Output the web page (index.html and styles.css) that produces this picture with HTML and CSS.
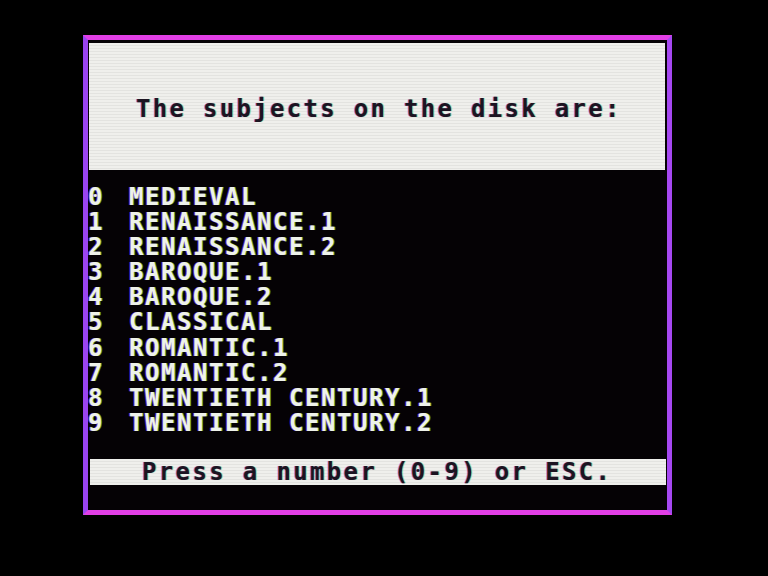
FILE: index.html
```html
<!DOCTYPE html>
<html>
<head>
<meta charset="utf-8">
<link rel="stylesheet" href="styles.css">
</head>
<body>
<div class="frame">
  <div class="header"><span class="title">The subjects on the disk are:</span></div>
  <div class="list">
    <div class="row"><span class="num">0</span><span class="item">MEDIEVAL</span></div>
    <div class="row"><span class="num">1</span><span class="item">RENAISSANCE.1</span></div>
    <div class="row"><span class="num">2</span><span class="item">RENAISSANCE.2</span></div>
    <div class="row"><span class="num">3</span><span class="item">BAROQUE.1</span></div>
    <div class="row"><span class="num">4</span><span class="item">BAROQUE.2</span></div>
    <div class="row"><span class="num">5</span><span class="item">CLASSICAL</span></div>
    <div class="row"><span class="num">6</span><span class="item">ROMANTIC.1</span></div>
    <div class="row"><span class="num">7</span><span class="item">ROMANTIC.2</span></div>
    <div class="row"><span class="num">8</span><span class="item">TWENTIETH CENTURY.1</span></div>
    <div class="row"><span class="num">9</span><span class="item">TWENTIETH CENTURY.2</span></div>
  </div>
  <div class="footer"><span class="prompt">Press a number (0-9) or ESC.</span></div>
</div>
</body>
</html>
```
FILE: styles.css
```css
html, body {
  margin: 0;
  padding: 0;
  background: #000;
}
body {
  width: 768px;
  height: 576px;
  overflow: hidden;
  font-family: "DejaVu Sans Mono", "Liberation Mono", monospace;
  font-weight: bold;
  font-size: 24px;
}
.frame {
  box-sizing: border-box;
  margin: 35px 0 0 83px;
  width: 589px;
  height: 480px;
  border-style: solid;
  border-width: 5px;
  border-color: #e23fe6 #a648f2 #e23fe6 #9a44f0;
  background: #050205;
  display: flex;
  flex-direction: column;
}
.header {
  box-sizing: border-box;
  margin: 3px 2px 0 1px;
  height: 127px;
  padding: 54px 0 0 47px;
  background-color: #efefec;
  background-image: repeating-linear-gradient(to bottom, rgba(0,0,0,0) 0, rgba(0,0,0,0) 2px, rgba(0,0,0,0.05) 2px, rgba(0,0,0,0.05) 3px);
  line-height: 24px;
}
.title {
  color: #1c1422;
  letter-spacing: 2.3px;
  white-space: pre;
  text-shadow: -1px 0 rgba(140, 40, 220, 0.55), 1px 0 rgba(90, 200, 40, 0.45);
}
.list {
  margin: 15px 0 0 0;
  display: flex;
  flex-direction: column;
}
.row {
  display: flex;
  height: 25.1px;
  line-height: 25.1px;
  color: #eef2ea;
  white-space: pre;
  text-shadow: -1px 0 rgba(170, 60, 255, 0.7), 1px 0 rgba(110, 255, 60, 0.6);
}
.num {
  width: 41px;
}
.item {
  letter-spacing: 1.55px;
}
.footer {
  box-sizing: border-box;
  margin: 23px 1px 0 2px;
  height: 26px;
  padding-left: 52px;
  background-color: #efefec;
  background-image: repeating-linear-gradient(to bottom, rgba(0,0,0,0) 0, rgba(0,0,0,0) 2px, rgba(0,0,0,0.05) 2px, rgba(0,0,0,0.05) 3px);
  line-height: 27px;
}
.prompt {
  color: #1c1422;
  letter-spacing: 2.35px;
  white-space: pre;
  text-shadow: -1px 0 rgba(140, 40, 220, 0.55), 1px 0 rgba(90, 200, 40, 0.45);
}
```
